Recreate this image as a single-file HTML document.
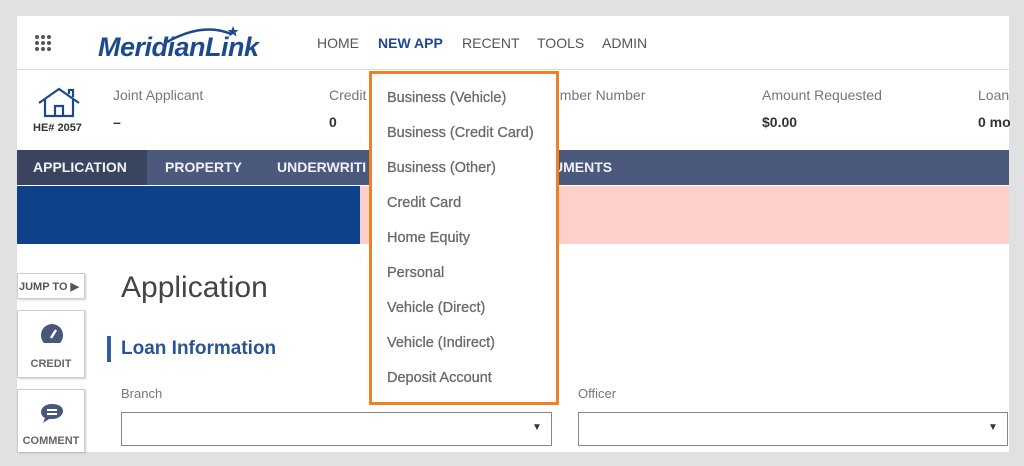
<!DOCTYPE html>
<html><head><style>
*{margin:0;padding:0;box-sizing:border-box}
body{width:1024px;height:466px;background:#dfe1e2;font-family:"Liberation Sans",Arial,sans-serif;position:relative;overflow:hidden}
.p{position:absolute;left:17px;top:16px;width:992px;height:436px;background:#fff;overflow:hidden}
.a{position:absolute;white-space:nowrap}
.nav{font-size:14px;color:#555;top:35px}
.lbl{font-size:14px;color:#777;top:87px}
.val{font-size:14px;color:#333;font-weight:bold;top:114px}
.tab{font-size:14px;font-weight:bold;color:#f0f2f6;top:159px}
.dd{position:absolute;left:369px;top:71px;width:190px;height:334px;border:3px solid #ef8124;background:#fff}
.dd div{position:absolute;left:15px;font-size:14.5px;color:#6a6a6a;white-space:nowrap;-webkit-text-stroke:0.3px #6a6a6a}
.side{position:absolute;left:17px;width:68px;background:#fff;border:1px solid #ccc;box-shadow:1px 1px 2px rgba(0,0,0,.2)}
</style></head><body>
<div class="p"></div>
<div class="a" style="left:17px;top:69px;width:992px;height:1px;background:#ddd"></div>
<svg class="a" style="left:34px;top:34px" width="20" height="18"><g fill="#555"><circle cx="3" cy="3" r="2"/><circle cx="9" cy="3" r="2"/><circle cx="15" cy="3" r="2"/><circle cx="3" cy="9" r="2"/><circle cx="9" cy="9" r="2"/><circle cx="15" cy="9" r="2"/><circle cx="3" cy="15" r="2"/><circle cx="9" cy="15" r="2"/><circle cx="15" cy="15" r="2"/></g></svg>
<svg class="a" style="left:165px;top:24px" width="80" height="20"><path d="M2 18 Q38 -2 66 10" stroke="#1d4a8c" stroke-width="2.5" fill="none"/><path d="M68 2 l1.5 4 4 0 -3 2.5 1 4 -3.5-2.5 -3.5 2.5 1-4 -3-2.5 4 0z" fill="#1d4a8c"/></svg>
<div class="a" style="left:98px;top:32px;font-size:27px;font-weight:bold;font-style:italic;color:#1d4a8c;letter-spacing:-0.5px">MeridianLink</div>
<div class="a nav" style="left:317px">HOME</div>
<div class="a nav" style="left:378px;color:#1d4a8c;font-weight:bold">NEW APP</div>
<div class="a nav" style="left:462px">RECENT</div>
<div class="a nav" style="left:537px">TOOLS</div>
<div class="a nav" style="left:602px">ADMIN</div>
<svg class="a" style="left:37px;top:86px" width="46" height="32"><path d="M2 17 L22 3 L42 17 M8 13 V30 H36 V13 M18 30 V20 H26 V30 M32 8 V4 H36 V11" stroke="#1d4a8c" stroke-width="2.2" fill="none"/></svg>
<div class="a" style="left:33px;top:122px;font-size:11px;font-weight:bold;color:#333">HE# 2057</div>
<div class="a lbl" style="left:113px">Joint Applicant</div>
<div class="a val" style="left:113px">–</div>
<div class="a lbl" style="left:329px">Credit</div>
<div class="a val" style="left:329px">0</div>
<div class="a lbl" style="left:552px">ember Number</div>
<div class="a lbl" style="left:762px">Amount Requested</div>
<div class="a val" style="left:762px">$0.00</div>
<div class="a lbl" style="left:978px">Loan</div>
<div class="a val" style="left:978px">0 mo</div>
<div class="a" style="left:17px;top:150px;width:992px;height:35px;background:#4b5a7c"></div>
<div class="a" style="left:17px;top:150px;width:130px;height:35px;background:#39455f"></div>
<div class="a tab" style="left:33px">APPLICATION</div>
<div class="a tab" style="left:165px">PROPERTY</div>
<div class="a tab" style="left:277px">UNDERWRITI</div>
<div class="a tab" style="left:553px">UMENTS</div>
<div class="a" style="left:17px;top:186px;width:343px;height:58px;background:#0e418a"></div>
<div class="a" style="left:360px;top:186px;width:649px;height:58px;background:#fed0cb"></div>
<div class="side" style="top:273px;height:26px;font-size:11px;font-weight:bold;color:#555;padding:6px 0 0 1px">JUMP TO ▶</div>
<div class="side" style="top:310px;height:68px"><svg style="position:absolute;left:22px;top:12px" width="24" height="22"><path d="M12 1a11 11 0 0 0-11 11c0 3 1 6 3 8h16c2-2 3-5 3-8A11 11 0 0 0 12 1z" fill="#48577a"/><path d="M11 15 L16 7" stroke="#fff" stroke-width="2.5"/></svg><div style="position:absolute;top:47px;width:100%;text-align:center;font-size:11px;color:#666;font-weight:bold">CREDIT</div></div>
<div class="side" style="top:389px;height:63px;border-bottom:none"><svg style="position:absolute;left:22px;top:13px" width="24" height="22"><path d="M12 1C5 1 1 5 1 9c0 3 2 5 4 6l-2 5 6-4c1 0 2 0 3 0 7 0 11-4 11-8S19 1 12 1z" fill="#48577a"/><path d="M7 7h10M7 11h10" stroke="#fff" stroke-width="2"/></svg><div style="position:absolute;top:45px;width:100%;text-align:center;font-size:11px;color:#666;font-weight:bold">COMMENT</div></div>
<div class="a" style="left:121px;top:271px;font-size:30px;color:#444">Application</div>
<div class="a" style="left:107px;top:336px;width:4px;height:26px;background:#2e5fa5"></div>
<div class="a" style="left:121px;top:338px;font-size:19px;font-weight:bold;color:#2a5496">Loan Information</div>
<div class="a" style="left:121px;top:386px;font-size:13px;color:#777">Branch</div>
<div class="a" style="left:121px;top:412px;width:431px;height:34px;border:1px solid #888"></div>
<div class="a" style="left:532px;top:422px;font-size:10px;color:#333">▼</div>
<div class="a" style="left:578px;top:386px;font-size:13px;color:#777">Officer</div>
<div class="a" style="left:578px;top:412px;width:430px;height:34px;border:1px solid #888"></div>
<div class="a" style="left:988px;top:422px;font-size:10px;color:#333">▼</div>
<div class="dd">
<div style="top:16px">Business (Vehicle)</div>
<div style="top:51px">Business (Credit Card)</div>
<div style="top:86px">Business (Other)</div>
<div style="top:121px">Credit Card</div>
<div style="top:156px">Home Equity</div>
<div style="top:191px">Personal</div>
<div style="top:226px">Vehicle (Direct)</div>
<div style="top:261px">Vehicle (Indirect)</div>
<div style="top:296px">Deposit Account</div>
</div>
</body></html>
